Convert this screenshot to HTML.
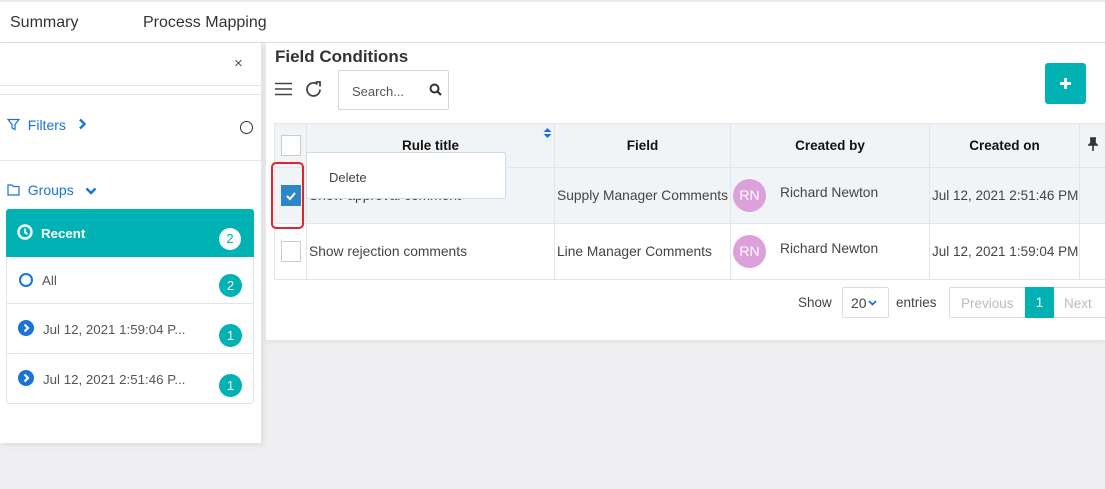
<!DOCTYPE html>
<html><head><style>
*{box-sizing:border-box;margin:0;padding:0}
body{width:1105px;height:489px;overflow:hidden;background:#efeff1;font-family:"Liberation Sans",sans-serif;position:relative;color:#333}
.abs{position:absolute}
.top{left:0;top:0;width:1105px;height:43px;background:#fff;border-top:2px solid #eaeaea;border-bottom:1px solid #dde0e5}
.top span{position:absolute;top:12px;font-size:16px;color:#333}
.left{left:0;top:43px;width:261px;height:400px;background:#fff;box-shadow:2px 2px 6px rgba(0,0,0,.08)}
.hr{position:absolute;left:0;width:261px;height:1px;background:#e4e6ea}
.blue{color:#1a73d9}
.item{position:absolute;left:6px;width:248px;background:#fff;border-left:1px solid #e1e3e7;border-right:1px solid #e1e3e7;border-bottom:1px solid #e1e3e7;font-size:13.3px;color:#555}
.badge{position:absolute;right:11px;width:23px;height:23px;border-radius:50%;background:#00b2b4;color:#fff;font-size:13px;text-align:center;line-height:23px}
.card{left:266px;top:43px;width:839px;height:297px;background:#fff;box-shadow:0 2px 5px rgba(0,0,0,.06)}
table{position:absolute;left:274px;top:123px;border-collapse:collapse;font-size:13.8px;color:#444;table-layout:fixed;width:832px}
td,th{border:1px solid #e2e6ec;height:56px;padding:0;white-space:nowrap;overflow:hidden}
th{background:#f1f4f7;height:44px;font-weight:bold;color:#111;font-size:13.5px}
.cb{width:20px;height:21px;border:1px solid #ccc;background:#fff;margin:0 auto}
.av{display:inline-block;width:33px;height:33px;border-radius:50%;background:#dca0db;color:#fff;text-align:center;line-height:33px;font-size:14px;vertical-align:middle;margin-left:2px}
</style></head><body>
<div class="abs top"><span style="left:10px">Summary</span><span style="left:143px">Process Mapping</span></div>
<div class="abs left">
 <div class="abs" style="left:234px;top:12px;font-size:15px;color:#555">×</div>
 <div class="hr" style="top:42px"></div><div class="hr" style="top:51px"></div>
 <div class="abs blue" style="left:7px;top:74px;font-size:14px"><svg width="13" height="13" viewBox="0 0 13 13" style="vertical-align:-1px"><path d="M1 1.5h11L8 6.5v5l-3-1.5V6.5z" fill="none" stroke="#1a73d9" stroke-width="1.2"/></svg>&nbsp;&nbsp;Filters&nbsp;&nbsp;&nbsp;<svg width="9" height="12" viewBox="0 0 9 12"><path d="M2 1.5l4.5 4.5-4.5 4.5" fill="none" stroke="#1a73d9" stroke-width="2.4"/></svg></div>
 <div class="abs" style="left:240px;top:78px;width:13px;height:13px;border:1.5px solid #333;border-radius:50%"></div>
 <div class="hr" style="top:117px"></div>
 <div class="abs blue" style="left:7px;top:139px;font-size:14px"><svg width="13" height="12" viewBox="0 0 13 12" style="vertical-align:-1px"><path d="M1 1h4l1.5 1.5H12V11H1z" fill="none" stroke="#1a73d9" stroke-width="1.2"/></svg>&nbsp;&nbsp;Groups&nbsp;&nbsp;&nbsp;<svg width="12" height="8" viewBox="0 0 12 8"><path d="M1.5 1.5l4.5 4.5 4.5-4.5" fill="none" stroke="#1a73d9" stroke-width="2.4"/></svg></div>
 <div class="abs" style="left:6px;top:166px;width:248px;height:48px;background:#00b2b4;border-radius:3px 3px 0 0;color:#fff;font-size:13.3px;font-weight:bold">
  <svg class="abs" style="left:11px;top:15px" width="16" height="16" viewBox="0 0 16 16"><circle cx="8" cy="8" r="6.5" fill="none" stroke="#fff" stroke-width="2.4"/><path d="M8 4.5V8.5l2.5 1.5" stroke="#fff" stroke-width="1.8" fill="none"/></svg>
  <span class="abs" style="left:35px;top:17px">Recent</span>
  <div class="badge" style="background:#fff;color:#00b2b4;top:19px;right:13px;width:22px;height:22px;line-height:22px;font-weight:normal">2</div>
 </div>
 <div class="item" style="top:214px;height:47px"><span class="abs" style="left:12px;top:16px;width:14px;height:14px;border:2px solid #1a73d9;border-radius:50%"></span><span class="abs" style="left:35px;top:16px">All</span><div class="badge" style="top:17px">2</div></div>
 <div class="item" style="top:261px;height:50px"><svg class="abs" style="left:11px;top:16px" width="16" height="16" viewBox="0 0 16 16"><circle cx="8" cy="8" r="8" fill="#1a73d9"/><path d="M6.5 4.5l3.5 3.5-3.5 3.5" stroke="#fff" stroke-width="2.2" fill="none"/></svg><span class="abs" style="left:36px;top:18px">Jul 12, 2021 1:59:04 P...</span><div class="badge" style="top:20px">1</div></div>
 <div class="item" style="top:311px;height:50px;border-radius:0 0 3px 3px"><svg class="abs" style="left:11px;top:16px" width="16" height="16" viewBox="0 0 16 16"><circle cx="8" cy="8" r="8" fill="#1a73d9"/><path d="M6.5 4.5l3.5 3.5-3.5 3.5" stroke="#fff" stroke-width="2.2" fill="none"/></svg><span class="abs" style="left:36px;top:18px">Jul 12, 2021 2:51:46 P...</span><div class="badge" style="top:20px">1</div></div>
</div>
<div class="abs card"></div>
<div class="abs" style="left:275px;top:47px;font-size:17px;font-weight:bold;color:#333">Field Conditions</div>
<svg class="abs" style="left:275px;top:82px" width="17" height="14" viewBox="0 0 17 14"><path d="M0 1.5h17M0 7h17M0 12.5h17" stroke="#444" stroke-width="1.6"/></svg>
<svg class="abs" style="left:304px;top:80px" width="19" height="19" viewBox="0 0 19 19"><path d="M16 9.5A6.5 6.5 0 1 1 13.5 4.3" fill="none" stroke="#444" stroke-width="1.8"/><path d="M11.5 2h4.5v4.5" fill="none" stroke="#444" stroke-width="1.8"/></svg>
<div class="abs" style="left:338px;top:70px;width:111px;height:40px;border:1px solid #cfd6df;border-radius:2px;font-size:13px;color:#555;padding:13px 0 0 13px">Search...
<svg class="abs" style="left:90px;top:12px" width="13" height="13" viewBox="0 0 13 13"><circle cx="5.5" cy="5.5" r="4" fill="none" stroke="#333" stroke-width="2"/><path d="M8.5 8.5l3.5 3.5" stroke="#333" stroke-width="2.2"/></svg></div>
<div class="abs" style="left:1045px;top:63px;width:41px;height:41px;background:#00b2b4;border-radius:3px">
<svg class="abs" style="left:14px;top:14px" width="13" height="13" viewBox="0 0 13 13"><path d="M6.5 1v11M1 6.5h11" stroke="#fff" stroke-width="3"/></svg></div>
<table>
<colgroup><col style="width:32px"><col style="width:248px"><col style="width:176px"><col style="width:199px"><col style="width:150px"><col style="width:27px"></colgroup>
<tr><th><div class="cb"></div></th><th style="position:relative">Rule title<svg style="position:absolute;right:2px;top:3px" width="9" height="12" viewBox="0 0 9 12"><path d="M0.5 5L4.5 1 8.5 5zM0.5 7L4.5 11 8.5 7z" fill="#1a73d9"/></svg></th><th>Field</th><th>Created by</th><th>Created on</th><th><svg width="10" height="14" viewBox="0 0 10 14"><path d="M2 1h6M3 1v5L1 8h8L7 6V1M5 8v6" stroke="#333" stroke-width="1.6" fill="#333"/></svg></th></tr>
<tr style="background:#f1f4f7"><td><div class="cb" style="background:#2f86c6;border-color:#2f86c6;text-align:center"><svg width="12" height="10" viewBox="0 0 12 10" style="margin-top:5px"><path d="M2 5l3 3 5-6" stroke="#fff" stroke-width="2" fill="none"/></svg></div></td><td style="padding-left:2px">Show approval comment</td><td style="padding-left:2px">Supply Manager Comments</td><td><span class="av">RN</span><span style="margin-left:14px;vertical-align:2px">Richard Newton</span></td><td style="padding-left:2px;font-size:13.5px">Jul 12, 2021 2:51:46 PM</td><td></td></tr>
<tr><td><div class="cb"></div></td><td style="padding-left:2px">Show rejection comments</td><td style="padding-left:2px">Line Manager Comments</td><td><span class="av">RN</span><span style="margin-left:14px;vertical-align:2px">Richard Newton</span></td><td style="padding-left:2px;font-size:13.5px">Jul 12, 2021 1:59:04 PM</td><td></td></tr>
</table>
<div class="abs" style="left:306px;top:152px;width:200px;height:47px;background:#fff;border:1px solid #d6d9de;border-radius:2px;font-size:13px;color:#444;padding:17px 0 0 22px">Delete</div>
<div class="abs" style="left:271px;top:162px;width:33px;height:67px;border:2px solid #e0242b;border-radius:5px"></div>
<div class="abs" style="left:798px;top:295px;font-size:13.5px;color:#444">Show</div>
<div class="abs" style="left:842px;top:287px;width:47px;height:31px;border:1px solid #d8dde5;border-radius:2px;font-size:14px;color:#444;padding:7px 0 0 8px">20<svg width="9" height="6" viewBox="0 0 9 6" style="margin-left:1px;vertical-align:2px"><path d="M1 1l3.5 3.5L8 1" stroke="#1a73d9" stroke-width="1.8" fill="none"/></svg></div>
<div class="abs" style="left:896px;top:295px;font-size:13.5px;color:#444">entries</div>
<div class="abs" style="left:949px;top:287px;width:160px;height:31px;border:1px solid #d8dde5;border-radius:2px;font-size:13.5px;color:#bbb">
<span class="abs" style="left:11px;top:8px">Previous</span>
<div class="abs" style="left:75px;top:-1px;width:29px;height:31px;background:#00b2b4;color:#fff;text-align:center;line-height:31px">1</div>
<span class="abs" style="left:114px;top:8px">Next</span></div>
</body></html>
